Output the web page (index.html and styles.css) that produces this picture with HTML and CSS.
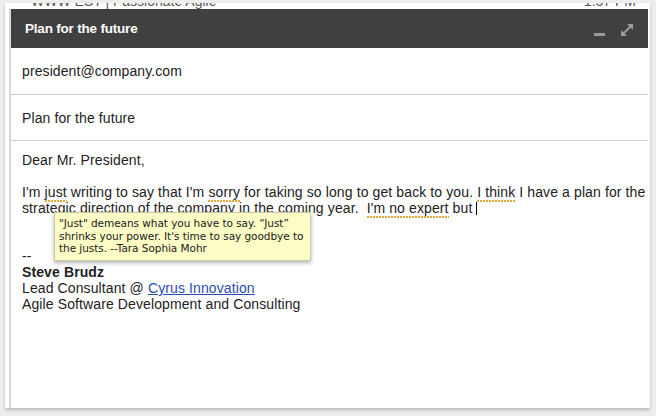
FILE: index.html
```html
<!DOCTYPE html>
<html>
<head>
<meta charset="utf-8">
<link rel="stylesheet" href="styles.css">
</head>
<body>
<div class="page">
  <div class="topstrip">
    <span class="bgtext bg-left">WWW EST | Passionate Agile</span>
    <span class="bgtext bg-right">1:57 PM</span>
  </div>
  <div class="compose">
    <div class="header">
      <div class="title">Plan for the future</div>
      <div class="icons">
        <svg class="ic-min" width="12" height="14" viewBox="0 0 12 14"><rect x="0" y="10" width="11" height="3" fill="#9a9a9a"/></svg>
        <svg class="ic-exp" width="14" height="14" viewBox="0 0 14 14"><path d="M3 11 L11 3" stroke="#9a9a9a" stroke-width="2.2"/><path d="M7 1 H13 V7 Z" fill="#9a9a9a"/><path d="M1 7 V13 H7 Z" fill="#9a9a9a"/></svg>
        <svg class="ic-close" width="12" height="14" viewBox="0 0 12 14"><path d="M1 2 L11 12 M11 2 L1 12" stroke="#9a9a9a" stroke-width="2"/></svg>
      </div>
    </div>
    <div class="field to">president@company.com</div>
    <div class="field subject">Plan for the future</div>
    <div class="body">
      <div class="line">Dear Mr. President,</div>
      <div class="line">&nbsp;</div>
      <div class="line">I'm <span class="sp">just</span> writing to say that I'm <span class="sp">sorry</span> for taking so long to get back to you. <span class="sp">I think</span> I have a plan for the</div>
      <div class="line">strategic direction of the company in the coming year.&nbsp; <span class="sp">I'm no expert</span> but <span class="caret"></span></div>
      <div class="line">&nbsp;</div>
      <div class="line">&nbsp;</div>
      <div class="line">--</div>
      <div class="line bold">Steve Brudz</div>
      <div class="line">Lead Consultant @ <a class="link" href="#">Cyrus Innovation</a></div>
      <div class="line">Agile Software Development and Consulting</div>
      <div class="tooltip">"Just" demeans what you have to say. “Just”<br>shrinks your power. It's time to say goodbye to<br>the justs. --Tara Sophia Mohr</div>
    </div>
  </div>
</div>
</body>
</html>
```
FILE: styles.css
```css
html, body {
  margin: 0;
  padding: 0;
}
body {
  background: #ededed;
  width: 656px;
  height: 416px;
  overflow: hidden;
  font-family: "Liberation Sans", Arial, sans-serif;
}
.page {
  margin: 3px 0 0 5px;
  width: 645px;
  height: 405px;
  background: #fff;
  box-shadow: 0 2px 3px rgba(0,0,0,0.22);
  display: flex;
  flex-direction: column;
  overflow: hidden;
}
.topstrip {
  height: 6px;
  overflow: hidden;
  display: flex;
  justify-content: space-between;
  padding: 0 14px 0 26px;
}
.bgtext {
  font-size: 14px;
  color: #555;
  line-height: 14px;
  margin-top: -9px;
}
.compose {
  flex: 1;
  margin-left: 4px;
  width: 637px;
  border-left: 2px solid #d8d8d8;
  display: flex;
  flex-direction: column;
}
.header {
  height: 39px;
  background: #404040;
  display: flex;
  align-items: center;
  overflow: hidden;
  padding-left: 14px;
}
.title {
  color: #fff;
  font-weight: bold;
  font-size: 13.5px;
  letter-spacing: -0.2px;
}
.icons {
  margin-left: auto;
  display: flex;
  align-items: center;
  gap: 14px;
  margin-right: -12px;
  padding-top: 2px;
}
.field {
  font-size: 14px;
  letter-spacing: 0.1px;
  color: #222;
  padding-left: 11px;
  display: flex;
  align-items: center;
  border-bottom: 1px solid #cfcfcf;
}
.to {
  height: 46px;
}
.subject {
  height: 45px;
}
.body {
  position: relative;
  flex: 1;
  padding: 11px 0 0 11px;
  font-size: 14px;
  letter-spacing: 0.11px;
  line-height: 16px;
  color: #222;
}
.line {
  white-space: nowrap;
}
.bold {
  font-weight: bold;
}
.link {
  color: #2a4db5;
  text-decoration: underline;
}
.sp {
  padding-bottom: 2px;
  background: linear-gradient(90deg, #e2a93e 2px, transparent 2px) repeat-x left bottom / 3px 2px;
}
.caret {
  display: inline-block;
  width: 1px;
  height: 13px;
  background: #000;
  vertical-align: -2px;
}
.tooltip {
  position: absolute;
  left: 43px;
  top: 71px;
  width: 246px;
  padding: 4px 5px 5px 4px;
  background: #fdfdc6;
  border: 1px solid #c9c9a8;
  box-shadow: 0 2px 4px rgba(0,0,0,0.3);
  font-family: "DejaVu Sans", sans-serif;
  font-size: 10.5px;
  letter-spacing: -0.05px;
  line-height: 12.5px;
  color: #1a1a1a;
  white-space: nowrap;
}
```
